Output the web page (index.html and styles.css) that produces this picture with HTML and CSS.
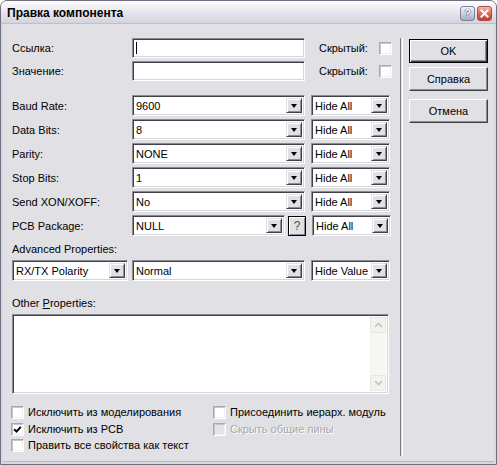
FILE: index.html
```html
<!DOCTYPE html>
<html>
<head>
<meta charset="utf-8">
<title>Правка компонента</title>
<link rel="stylesheet" href="styles.css">
</head>
<body>
<div class="window">
  <div class="titlebar">
    <span class="title">Правка компонента</span>
    <div class="tb-buttons">
      <span class="tb-btn help">?</span>
      <span class="tb-btn close"><svg width="9" height="9" viewBox="0 0 9 9"><path d="M1.5 1.5 L7.5 7.5 M7.5 1.5 L1.5 7.5" stroke="#fff" stroke-width="2" stroke-linecap="square"/></svg></span>
    </div>
  </div>
  <div class="client">
    <div class="main">
      <div class="row r-edit first">
        <span class="label">Ссылка:</span>
        <div class="edit sunken"><span class="caret"></span></div>
        <span class="hidden-label">Скрытый:</span>
        <span class="check sunken"></span>
      </div>
      <div class="row r-edit second">
        <span class="label">Значение:</span>
        <div class="edit sunken"></div>
        <span class="hidden-label">Скрытый:</span>
        <span class="check sunken"></span>
      </div>

      <div class="props">
        <div class="row r-prop">
          <span class="label">Baud Rate:</span>
          <div class="combo sunken wide"><span class="val">9600</span><span class="dd"><i class="tri"></i></span></div>
          <div class="combo sunken hide"><span class="val">Hide All</span><span class="dd"><i class="tri"></i></span></div>
        </div>
        <div class="row r-prop">
          <span class="label">Data Bits:</span>
          <div class="combo sunken wide"><span class="val">8</span><span class="dd"><i class="tri"></i></span></div>
          <div class="combo sunken hide"><span class="val">Hide All</span><span class="dd"><i class="tri"></i></span></div>
        </div>
        <div class="row r-prop">
          <span class="label">Parity:</span>
          <div class="combo sunken wide"><span class="val">NONE</span><span class="dd"><i class="tri"></i></span></div>
          <div class="combo sunken hide"><span class="val">Hide All</span><span class="dd"><i class="tri"></i></span></div>
        </div>
        <div class="row r-prop">
          <span class="label">Stop Bits:</span>
          <div class="combo sunken wide"><span class="val">1</span><span class="dd"><i class="tri"></i></span></div>
          <div class="combo sunken hide"><span class="val">Hide All</span><span class="dd"><i class="tri"></i></span></div>
        </div>
        <div class="row r-prop">
          <span class="label">Send XON/XOFF:</span>
          <div class="combo sunken wide"><span class="val">No</span><span class="dd"><i class="tri"></i></span></div>
          <div class="combo sunken hide"><span class="val">Hide All</span><span class="dd"><i class="tri"></i></span></div>
        </div>
        <div class="row r-prop">
          <span class="label">PCB Package:</span>
          <div class="combo sunken pcb"><span class="val">NULL</span><span class="dd"><i class="tri"></i></span></div>
          <span class="qbtn">?</span>
          <div class="combo sunken hide"><span class="val">Hide All</span><span class="dd"><i class="tri"></i></span></div>
        </div>
      </div>

      <div class="section-label adv">Advanced Properties:</div>
      <div class="row r-adv">
        <div class="combo sunken rx"><span class="val">RX/TX Polarity</span><span class="dd"><i class="tri"></i></span></div>
        <div class="combo sunken wide"><span class="val">Normal</span><span class="dd"><i class="tri"></i></span></div>
        <div class="combo sunken hide"><span class="val">Hide Value</span><span class="dd"><i class="tri"></i></span></div>
      </div>

      <div class="section-label other">Other <u>P</u>roperties:</div>
      <div class="memo sunken">
        <div class="memo-text"></div>
        <div class="vscroll">
          <span class="sb-btn"><svg width="9" height="6" viewBox="0 0 9 6"><path d="M1 5 L4.5 1.5 L8 5" fill="none" stroke="#c3c3c0" stroke-width="1.6"/></svg></span>
          <span class="sb-track"></span>
          <span class="sb-btn"><svg width="9" height="6" viewBox="0 0 9 6"><path d="M1 1 L4.5 4.5 L8 1" fill="none" stroke="#c3c3c0" stroke-width="1.6"/></svg></span>
        </div>
      </div>

      <div class="checks">
        <label class="cb"><span class="check sunken"></span>Исключить из моделирования</label>
        <label class="cb"><span class="check sunken"></span>Присоединить иерарх. модуль</label>
        <label class="cb"><span class="check sunken checked"><svg width="9" height="9" viewBox="0 0 9 9"><path d="M1.2 4.2 L3.5 6.6 L7.8 1.8" fill="none" stroke="#000" stroke-width="2"/></svg></span>Исключить из PCB</label>
        <label class="cb disabled"><span class="check sunken off"></span>Скрыть общие пины</label>
        <label class="cb"><span class="check sunken"></span>Править все свойства как текст</label>
      </div>
    </div>
    <div class="separator"></div>
    <div class="buttons">
      <span class="button default">OK</span>
      <span class="button b2">Справка</span>
      <span class="button b3">Отмена</span>
    </div>
  </div>
</div>
</body>
</html>
```

FILE: styles.css
```css
html, body {
  margin: 0;
  padding: 0;
  background: #ffffff;
}
body {
  font-family: "Liberation Sans", Arial, sans-serif;
  font-size: 11px;
  color: #000;
}
.window {
  width: 497px;
  height: 465px;
  box-sizing: border-box;
  border: 1px solid #6f6f82;
  border-radius: 7px 7px 0 0;
  background: #d8d8e2;
  display: flex;
  flex-direction: column;
  overflow: hidden;
}
.titlebar {
  height: 22px;
  flex: none;
  display: flex;
  align-items: center;
  justify-content: space-between;
  padding: 0 4px 0 6px;
  background: linear-gradient(to bottom, #ffffff 0%, #f2f2f6 25%, #e2e2ea 60%, #d4d4de 100%);
  border-bottom: 1px solid #c0c0cc;
}
.title {
  font-weight: bold;
  font-size: 12px;
  color: #000;
  padding-top: 2px;
}
.tb-buttons {
  display: flex;
  gap: 2px;
  padding-top: 2px;
}
.tb-btn {
  width: 15px;
  height: 15px;
  box-sizing: border-box;
  border-radius: 3px;
  display: flex;
  align-items: center;
  justify-content: center;
  font-weight: bold;
  font-size: 11px;
}
.help {
  background: linear-gradient(to bottom, #f4f6fb, #c6cbdc 60%, #a6acc4);
  border: 1px solid #7b809c;
  color: #fff;
  text-shadow: 0 0 1px #2f3450, 0 0 1px #2f3450;
}
.close {
  background: linear-gradient(to bottom, #f6b8a8, #e0604a 55%, #c8402c);
  border: 1px solid #a05050;
}
.client {
  flex: 1;
  display: flex;
  margin: 0 2px 2px 2px;
  padding: 14px 0 0 9px;
  background: #e1e0e5;
  border-bottom: 1px solid #b8b8c4;
}
.main {
  width: 378px;
  display: flex;
  flex-direction: column;
}
.row {
  display: flex;
  align-items: center;
}
.label {
  width: 120px;
  flex: none;
}
.sunken {
  box-sizing: border-box;
  background: #fff;
  border: 1px solid;
  border-color: #8c8c94 #ffffff #ffffff #8c8c94;
  box-shadow: inset 1px 1px #404048, inset -1px -1px #d6d5da;
}
.r-edit {
  height: 20px;
}
.r-edit.second {
  margin-top: 3px;
}
.edit {
  width: 173px;
  height: 20px;
  flex: none;
  position: relative;
}
.caret {
  position: absolute;
  left: 3px;
  top: 3px;
  width: 1px;
  height: 12px;
  background: #000;
}
.hidden-label {
  margin-left: 14px;
  width: 60px;
  flex: none;
}
.check {
  width: 13px;
  height: 13px;
  flex: none;
  display: inline-flex;
  align-items: center;
  justify-content: center;
  border-color: #a8a8b0 #ffffff #ffffff #a8a8b0;
  box-shadow: inset 1px 1px #c8c8cc, inset -1px -1px #f0f0f0;
}
.check.off {
  background: #e4e4e8;
}
.props {
  margin-top: 14px;
  display: flex;
  flex-direction: column;
  gap: 3px;
}
.r-prop, .r-adv {
  height: 21px;
}
.combo {
  height: 21px;
  flex: none;
  display: flex;
  align-items: stretch;
  padding: 2px;
}
.combo .val {
  flex: 1;
  padding-left: 1px;
  line-height: 17px;
  white-space: nowrap;
  overflow: hidden;
}
.dd {
  width: 16px;
  flex: none;
  box-sizing: border-box;
  background: #e1e0e5;
  border: 1px solid;
  border-color: #e1e0e5 #404048 #404048 #e1e0e5;
  box-shadow: inset 1px 1px #fff, inset -1px -1px #8c8c94;
  display: flex;
  align-items: center;
  justify-content: center;
}
.tri {
  display: block;
  width: 0;
  height: 0;
  border-left: 3.5px solid transparent;
  border-right: 3.5px solid transparent;
  border-top: 4px solid #000;
}
.wide {
  width: 173px;
}
.hide {
  width: 79px;
  margin-left: 6px;
}
.pcb {
  width: 153px;
}
.qbtn {
  width: 18px;
  height: 20px;
  flex: none;
  box-sizing: border-box;
  margin-left: 3px;
  background: #e1e0e5;
  border: 1px solid #000;
  box-shadow: inset 1px 1px #fff, inset -1px -1px #8c8c94;
  display: flex;
  align-items: center;
  justify-content: center;
  color: #555;
  font-size: 12px;
}
.rx {
  width: 116px;
  margin-right: 4px;
}
.section-label {
  height: 13px;
  line-height: 13px;
}
.adv {
  margin-top: 7px;
  margin-bottom: 4px;
}
.other {
  margin-top: 16px;
  margin-bottom: 4px;
}
.memo {
  width: 377px;
  height: 80px;
  display: flex;
  padding: 2px;
}
.memo-text {
  flex: 1;
}
.vscroll {
  width: 16px;
  display: flex;
  flex-direction: column;
  background: #f6f6f2;
}
.sb-btn {
  height: 16px;
  flex: none;
  box-sizing: border-box;
  border: 1px solid #e8e8e2;
  background: #f2f2ee;
  display: flex;
  align-items: center;
  justify-content: center;
}
.sb-track {
  flex: 1;
}
.checks {
  margin-top: 12px;
  display: grid;
  grid-template-columns: 202px 1fr;
  grid-auto-rows: 16.5px;
  margin-left: -1px;
}
.cb {
  display: flex;
  align-items: flex-start;
  gap: 4px;
  line-height: 13px;
  white-space: nowrap;
}
.cb.disabled {
  color: #a8a8ac;
  text-shadow: 1px 1px #ffffff;
}
.separator {
  width: 1px;
  margin: 0 0 5px 10px;
  border-left: 1px solid #7c7c84;
  border-right: 1px solid #ffffff;
}
.buttons {
  margin-left: 6px;
  display: flex;
  flex-direction: column;
  width: 79px;
}
.button {
  height: 24px;
  box-sizing: border-box;
  display: flex;
  align-items: center;
  justify-content: center;
  background: #e1e0e5;
  border: 1px solid;
  border-color: #ffffff #404048 #404048 #ffffff;
  box-shadow: inset -1px -1px #8c8c94;
  font-size: 11px;
}
.button.default {
  margin-top: 1px;
  border: 1px solid #000;
  box-shadow: inset 1px 1px #fff, inset -1px -1px #404048, inset -2px -2px #8c8c94;
}
.b2 {
  margin-top: 4px;
}
.b3 {
  margin-top: 8px;
}
```
